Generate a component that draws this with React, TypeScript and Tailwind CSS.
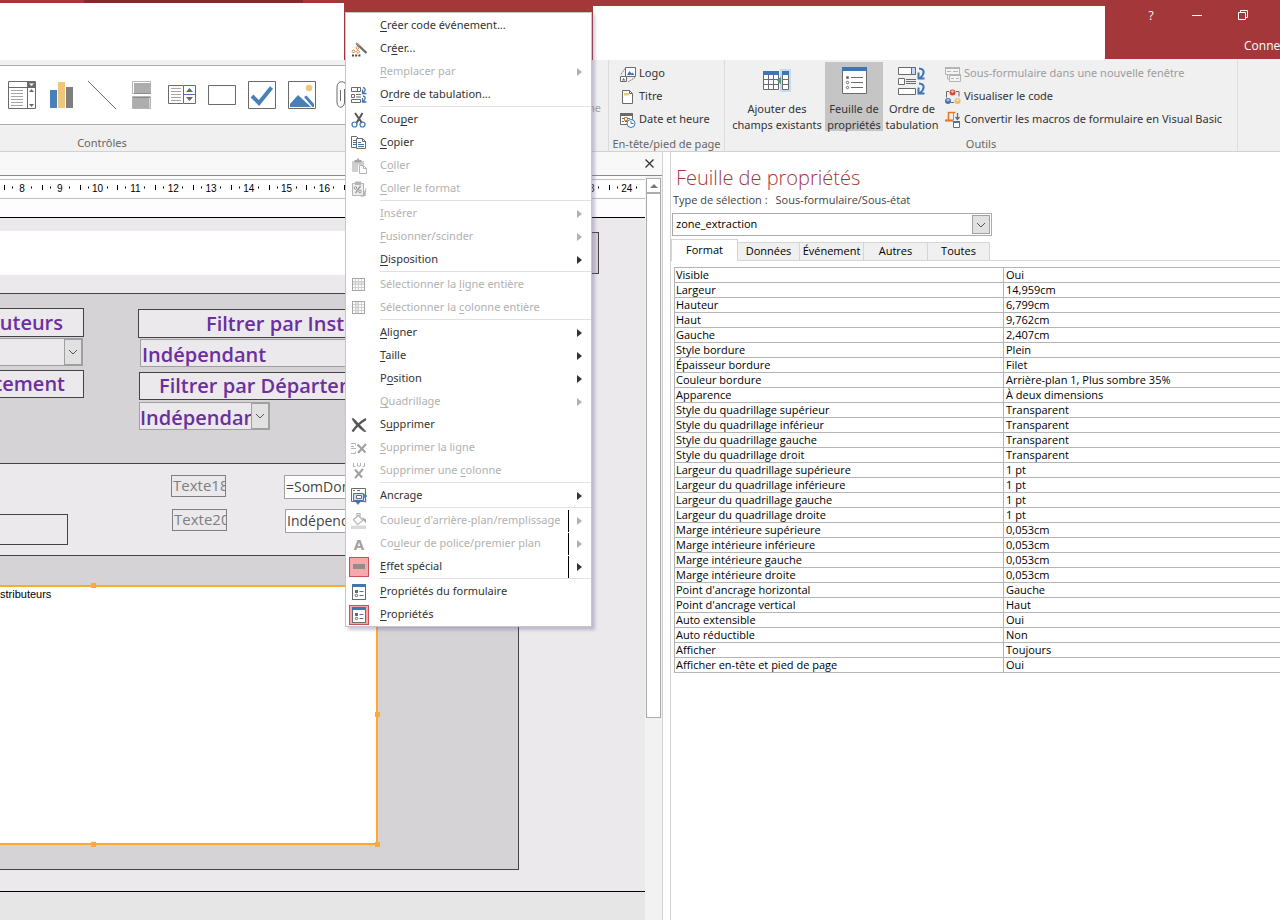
import { useState, type ReactNode } from 'react';
import clsx from 'clsx';

type MenuEntry = {
  label: string;
  // index of the underlined mnemonic letter
  key?: number;
  icon?: ReactNode;
  disabled?: boolean;
  sub?: boolean;
  split?: boolean;
  active?: boolean;
};

const GREY = '#6a6a6a';
const BLUE = '#3f75b5';
const ORANGE = '#e07b28';
const PALE = '#b4b4b4';

function Icon({ size = 20, children }: { size?: number; children: ReactNode }) {
  return (
    <svg width={size} height={size} viewBox={`0 0 ${size} ${size}`} fill="none" className="block shrink-0" aria-hidden="true">
      {children}
    </svg>
  );
}

const gridIcon = (
  <Icon>
    <path d="M3 6h13v4H3z" fill="#e2e2e2" />
    <path d="M6.5 3.5v12M9.5 3.5v12M12.5 3.5v12M3.5 6.5h12M3.5 9.5h12M3.5 12.5h12" stroke="#cfcfcf" />
    <rect x="3.5" y="3.5" width="12" height="12" stroke="#a6a6a6" />
  </Icon>
);

const gridColumnIcon = (
  <Icon>
    <path d="M6 3h4v13H6z" fill="#e2e2e2" />
    <path d="M6.5 3.5v12M9.5 3.5v12M12.5 3.5v12M3.5 6.5h12M3.5 9.5h12M3.5 12.5h12" stroke="#cfcfcf" />
    <rect x="3.5" y="3.5" width="12" height="12" stroke="#a6a6a6" />
  </Icon>
);

const sheetIcon = (
  <Icon>
    <rect x="3.5" y="2.5" width="13" height="15" fill="#fff" stroke={GREY} />
    <path d="M3 2h14v3H3z" fill={BLUE} />
    <path d="M6 8h3v3H6z" fill={GREY} />
    <path d="M10.5 9.5h4M10.5 13.5h4" stroke={GREY} />
    <circle cx="7.500" cy="13.500" r="1.200" stroke={GREY} />
  </Icon>
);

const MENU: MenuEntry[][] = [
  [
    { label: 'Créer code événement...', key: 0 },
    {
      label: 'Créer...',
      key: 2,
      icon: (
        <Icon>
          <path d="M7.500 4.500L17.500 14" stroke={GREY} strokeWidth="2.400" />
          <path d="M7 3.800l3.500 3.200" stroke="#9a9a9a" strokeWidth="1.200" />
          <path d="M8.500 7.200l1.600 1.600-1.600 1.600-1.600-1.600zM4.500 10.800l1.600 1.600-1.600 1.600-1.600-1.600zM9 11.200l1.600 1.600L9 14.400l-1.600-1.600z" stroke={ORANGE} />
          <path d="M3 15.500h2v2H3zM6.200 15.500h2v2h-2zM9.400 15.500h2v2h-2z" fill="#444" />
        </Icon>
      ),
    },
    { label: 'Remplacer par', key: 0, disabled: true, sub: true },
    {
      label: 'Ordre de tabulation...',
      key: 1,
      icon: (
        <Icon>
          <path d="M2.500 2.500h9v4h-9zM8.500 2.500v4M2.500 9.500h3v3h-3zM2.500 14.500h9v3h-9z" stroke={GREY} />
          <path d="M7 9.500h5M7 12h5" stroke={GREY} />
          <path d="M14 2.500c3 .5 3 3 0 5.500M13.500 4.500V8.500h4M14 11c3 .5 3 3 0 5.500M13.500 13v4h4" stroke={BLUE} strokeWidth="1.300" />
        </Icon>
      ),
    },
  ],
  [
    {
      label: 'Couper',
      key: 3,
      icon: (
        <Icon>
          <path d="M6 3l7 10M13.500 3l-6 10" stroke="#555" strokeWidth="2" />
          <circle cx="5.500" cy="14.500" r="2.500" stroke={BLUE} strokeWidth="1.200" />
          <circle cx="13.500" cy="14.500" r="2.500" stroke={BLUE} strokeWidth="1.200" />
        </Icon>
      ),
    },
    {
      label: 'Copier',
      key: 0,
      icon: (
        <Icon>
          <path d="M2.500 3.500h5l2 2v9h-7z" fill="#fff" stroke={GREY} />
          <path d="M4 7.500h3M4 9.500h3M4 11.500h3" stroke={BLUE} />
          <path d="M7.500 5.500h6l3 3v7h-9z" fill="#fff" stroke={GREY} />
          <path d="M13.500 5.500v3h3" stroke={GREY} />
          <path d="M9 9.500h3M9 11.500h6M9 13.500h6" stroke={BLUE} />
        </Icon>
      ),
    },
    {
      label: 'Coller',
      key: 1,
      disabled: true,
      icon: (
        <Icon>
          <path d="M3 5h12v4H9v7H3z" fill="#cfcfcf" />
          <path d="M5.500 4h2l1.500-2 1.500 2h2v2.500h-7z" fill="#a6a6a6" />
          <path d="M10.500 9.500h4l3 3v5h-7z" fill="#fff" stroke={PALE} />
          <path d="M14.500 9.500v3h3" stroke={PALE} />
        </Icon>
      ),
    },
    {
      label: 'Coller le format',
      key: 0,
      disabled: true,
      icon: (
        <Icon>
          <path d="M3.500 4.500h11v12h-11z" fill="#ededed" stroke={PALE} />
          <path d="M6 2.500h6V6H6z" fill={PALE} />
          <path d="M11.500 7l-5 7" stroke="#999" strokeWidth="1.300" />
          <circle cx="6.500" cy="9" r="1.300" stroke="#999" />
          <circle cx="11" cy="12.500" r="1.300" stroke="#999" />
          <path d="M17.500 8l-4 8-2 2 5-1z" fill={PALE} />
        </Icon>
      ),
    },
  ],
  [
    { label: 'Insérer', key: 0, disabled: true, sub: true },
    { label: 'Fusionner/scinder', key: 0, disabled: true, sub: true },
    { label: 'Disposition', key: 0, sub: true },
  ],
  [
    { label: 'Sélectionner la ligne entière', key: 16, disabled: true, icon: gridIcon },
    { label: 'Sélectionner la colonne entière', key: 16, disabled: true, icon: gridColumnIcon },
  ],
  [
    { label: 'Aligner', key: 0, sub: true },
    { label: 'Taille', key: 0, sub: true },
    { label: 'Position', key: 1, sub: true },
    { label: 'Quadrillage', key: 0, disabled: true, sub: true },
    {
      label: 'Supprimer',
      key: 1,
      icon: (
        <Icon>
          <path d="M3 3.500C5 3.500 6 4.500 7.500 6.500l9.500 10h-2C10 13 5 8 3 3.500z" fill="#555" stroke="#555" strokeWidth="0.600" />
          <path d="M17 4C12 7 8 10 3.500 16.500" stroke="#555" strokeWidth="2.200" />
        </Icon>
      ),
    },
    {
      label: 'Supprimer la ligne',
      key: 0,
      disabled: true,
      icon: (
        <Icon>
          <path d="M2 5.500h4.500v2M2 15.500h4.500v-2M2 10.500h5M2 8.500h3" stroke={PALE} />
          <path d="M8.500 6.500l8 8M17 6l-8 9" stroke="#a0a0a0" strokeWidth="2" />
        </Icon>
      ),
    },
    {
      label: 'Supprimer une colonne',
      key: 14,
      disabled: true,
      icon: (
        <Icon>
          <path d="M4.500 2v3.500h2M15.500 2v3.500h-2M8.500 2v3h3V2" stroke={PALE} />
          <path d="M6 8.500l7 8M14 8l-8 9" stroke="#a0a0a0" strokeWidth="2" />
        </Icon>
      ),
    },
  ],
  [
    {
      label: 'Ancrage',
      icon: (
        <Icon>
          <path d="M2.500 2.500h14v13h-14z" fill="#fff" stroke={GREY} />
          <path d="M4 4.500h2M8 4.500h3" stroke={GREY} />
          <path d="M4.500 7.500h10v7h-10z" fill="#cfdff0" stroke={BLUE} />
          <path d="M7.500 9.500h5v3h-5z" fill="#fff" stroke={GREY} />
          <path d="M7 16h4l-2 2.500zM15.500 8v4l2.500-2zM15.500 14h2M15.500 16h2" fill={BLUE} stroke={BLUE} strokeWidth="0.600" />
        </Icon>
      ),
      sub: true,
    },
  ],
  [
    {
      label: "Couleur d'arrière-plan/remplissage",
      key: 6,
      disabled: true,
      sub: true,
      split: true,
      icon: (
        <Icon>
          <path d="M4.500 8.500l5-4 4.500 5-5.500 4zM8 6V2.500h3v4" stroke={PALE} strokeWidth="1.200" />
          <path d="M13 6l4 2.500v4l-3-4z" fill="#a6a6a6" />
          <path d="M2 14.500h15v3.500H2z" fill="#dadada" />
        </Icon>
      ),
    },
    {
      label: 'Couleur de police/premier plan',
      key: 2,
      disabled: true,
      sub: true,
      split: true,
      icon: <span className="text-[15px] leading-4 font-bold text-[#a0a0a0]">A</span>,
    },
    {
      label: 'Effet spécial',
      key: 0,
      sub: true,
      split: true,
      active: true,
      icon: (
        <Icon size={18}>
          <path d="M3 6h12v5H3z" fill="#8e8e8e" />
        </Icon>
      ),
    },
  ],
  [
    { label: 'Propriétés du formulaire', key: 0, icon: sheetIcon },
    { label: 'Propriétés', key: 0, active: true, icon: sheetIcon },
  ],
];

const PROPERTIES: [string, string][] = [
  ['Visible', 'Oui'],
  ['Largeur', '14,959cm'],
  ['Hauteur', '6,799cm'],
  ['Haut', '9,762cm'],
  ['Gauche', '2,407cm'],
  ['Style bordure', 'Plein'],
  ['Épaisseur bordure', 'Filet'],
  ['Couleur bordure', 'Arrière-plan 1, Plus sombre 35%'],
  ['Apparence', 'À deux dimensions'],
  ['Style du quadrillage supérieur', 'Transparent'],
  ['Style du quadrillage inférieur', 'Transparent'],
  ['Style du quadrillage gauche', 'Transparent'],
  ['Style du quadrillage droit', 'Transparent'],
  ['Largeur du quadrillage supérieure', '1 pt'],
  ['Largeur du quadrillage inférieure', '1 pt'],
  ['Largeur du quadrillage gauche', '1 pt'],
  ['Largeur du quadrillage droite', '1 pt'],
  ['Marge intérieure supérieure', '0,053cm'],
  ['Marge intérieure inférieure', '0,053cm'],
  ['Marge intérieure gauche', '0,053cm'],
  ['Marge intérieure droite', '0,053cm'],
  ["Point d'ancrage horizontal", 'Gauche'],
  ["Point d'ancrage vertical", 'Haut'],
  ['Auto extensible', 'Oui'],
  ['Auto réductible', 'Non'],
  ['Afficher', 'Toujours'],
  ['Afficher en-tête et pied de page', 'Oui'],
];

const TABS = [
  { name: 'Format', width: 'w-[67px]' },
  { name: 'Données', width: 'w-[62px]' },
  { name: 'Événement', width: 'w-16' },
  { name: 'Autres', width: 'w-16' },
  { name: 'Toutes', width: 'w-[62px]' },
];

function TitleBar() {
  return (
    <header className="relative flex h-[60px] shrink-0 bg-[#a4373a] text-white">
      <div className="absolute top-0 left-[84px] h-[3px] w-[219px] bg-[#822b2e]" />
      <div className="mt-[3px] mr-[249px] w-[344px] shrink-0 bg-white" />
      <div className="mt-[6px] flex-1 bg-white" />
      <div className="flex w-[175px] shrink-0 flex-col overflow-hidden border-b border-[#f0f0f0]">
        <div className="flex h-8 shrink-0 items-center gap-[28px] pl-9">
          <button aria-label="Aide" className="w-5 text-[12px]">?</button>
          <button aria-label="Réduire">
            <Icon>
              <path d="M3 9.500h10" stroke="#fff" />
            </Icon>
          </button>
          <button aria-label="Restaurer">
            <Icon>
              <path d="M1.500 6.500h7v7h-7zM3.500 6.500v-2h7v7h-2" stroke="#fff" />
            </Icon>
          </button>
        </div>
        <a href="#" className="shrink-0 pl-[139px] text-[12px] leading-7 whitespace-nowrap">Connexion</a>
      </div>
    </header>
  );
}

function ControlGallery() {
  return (
    <div className="flex h-[60px] items-center gap-3 overflow-hidden border-y border-[#ababab] bg-white pl-2">
      <Icon size={28}>
        <path d="M.5.5h27v27H.5zM.5 6.500h27M19.500.5v27" stroke={GREY} />
        <path d="M20 1h7v5h-7z" fill={GREY} />
        <path d="M21 2.500h5L23.500 5z" fill="#fff" />
        <path d="M21 11l2.500-3 2.500 3zM21 23h5l-2.500 3z" fill={GREY} />
        <path d="M3 9.500h12M3 12.500h12M3 15.500h12M3 18.500h12M3 21.500h12M3 24.500h12" stroke="#a5a5a5" />
      </Icon>
      <Icon size={28}>
        <path d="M2 9h7v18H2z" fill="#4a80ba" />
        <path d="M10 1h7v26h-7z" fill="#efc77c" />
        <path d="M18 6h7v21h-7z" fill="#7d7f7f" />
      </Icon>
      <Icon size={28}>
        <path d="M0 0l28 28" stroke={GREY} />
      </Icon>
      <Icon size={28}>
        <path d="M4.500.5h18v12h-18zM4.500 15.500h18v12h-18z" fill="#fff" stroke={PALE} />
        <path d="M6 2h16.500v10.500H6zM5 16.500h16.500V27H5z" fill="#adadad" />
        <path d="M6 12.500h17M5 16.500h17" stroke="#8a8a8a" />
      </Icon>
      <Icon size={28}>
        <path d="M15 4.500H.5v18H15" stroke={GREY} />
        <path d="M3 7.500h10M3 10.500h10M3 13.500h10M3 16.500h10M3 19.500h10" stroke="#a5a5a5" />
        <path d="M15.500 4.500h12v18h-12zM15.500 13.500h12" stroke={BLUE} />
        <path d="M18 11l3.500-4 3.500 4zM18 16h7l-3.500 4z" fill={GREY} />
      </Icon>
      <Icon size={28}>
        <path d="M.5 4.500h27v19H.5z" stroke={GREY} />
      </Icon>
      <Icon size={28}>
        <path d="M.5.5h27v27H.5z" stroke={GREY} />
        <path d="M4 15l7 7L23.500 6.500" stroke="#4a80ba" strokeWidth="4" />
      </Icon>
      <Icon size={28}>
        <path d="M.5.5h27v27H.5z" stroke={GREY} />
        <circle cx="21" cy="7" r="3.200" fill="#efc77c" />
        <path d="M2 26v-3l8-9 13 12z" fill="#4a80ba" />
        <path d="M16 16l2.500-1.500L26 23v3h-1.500z" fill="#4a80ba" />
      </Icon>
      <div className="pl-2">
        <Icon size={28}>
          <path d="M8.500 8v13c0 7-7.500 7-7.500 0V6c0-7 9.500-7 9.500 0v14" stroke={GREY} />
          <path d="M4.500 9v11" stroke={GREY} />
        </Icon>
      </div>
    </div>
  );
}

function SmallButton({ icon, children, disabled }: { icon: ReactNode; children: ReactNode; disabled?: boolean }) {
  return (
    <button disabled={disabled} className="flex h-[23px] items-center gap-px whitespace-nowrap disabled:text-[#9d9d9d]">
      {icon}
      {children}
    </button>
  );
}

function Ribbon() {
  const big = 'flex h-[69px] shrink-0 flex-col items-center pt-[3px] text-center leading-4 whitespace-nowrap';
  return (
    <section className="flex h-[92px] shrink-0 overflow-hidden border-b border-[#d2d2d2] bg-[#f0f0f0] font-['Noto_Sans',sans-serif] text-[11px] text-[#333]">
      <div className="relative w-[609px] shrink-0 border-r border-[#dcdcdc] pt-[5px]">
        <div className="w-[575px]">
          <ControlGallery />
        </div>
        <p className="w-[204px] pt-[10px] text-center leading-4 text-[#666]">Contrôles</p>
        <span className="absolute top-10 right-[7px] text-[#a6a6a6]">ne</span>
      </div>

      <div className="flex w-[116px] shrink-0 flex-col border-r border-[#dcdcdc] pt-[2px]">
        <div className="flex flex-col pl-[9px]">
          <SmallButton
            icon={
              <Icon>
                <path d="M7.500 3.500h10v9h-10z" fill="#fff" stroke={GREY} />
                <path d="M9 11l2.500-4 2 2.500 1-1L16.500 11z" fill={BLUE} />
                <path d="M7 4.500L2.500 11M17 13.500L10 18" stroke={GREY} strokeDasharray="1.500 1" />
                <path d="M2.500 12.500h6v5h-6z" fill="#fff" stroke={GREY} />
                <path d="M4 16.500l1.500-2.500 2 2.500z" fill={BLUE} />
              </Icon>
            }
          >
            Logo
          </SmallButton>
          <SmallButton
            icon={
              <Icon>
                <path d="M4.500 3.500h7l3 3v10h-10z" fill="#fff" stroke={GREY} />
                <path d="M11.500 3.500v3h3" stroke={GREY} />
                <path d="M6 6h5v2.500H6z" fill="#efc77c" />
              </Icon>
            }
          >
            Titre
          </SmallButton>
          <SmallButton
            icon={
              <Icon>
                <path d="M2.500 3.500h12v11h-12z" fill="#fff" stroke={GREY} />
                <path d="M2 3h13v3H2z" fill={GREY} />
                <path d="M4 8.500h9M4 11.500h5" stroke={GREY} strokeDasharray="2 1" />
                <path d="M6.500 7.500h3v3h-3z" fill="#fff" stroke={ORANGE} />
                <circle cx="13" cy="13.500" r="4" fill="#fff" stroke={BLUE} />
                <path d="M13 11v2.500h2.500" stroke={BLUE} />
              </Icon>
            }
          >
            Date et heure
          </SmallButton>
        </div>
        <p className="pt-[5px] text-center leading-4 whitespace-nowrap text-[#666]">En-tête/pied de page</p>
      </div>

      <div className="flex w-[513px] shrink-0 flex-col border-r border-[#dcdcdc] pt-[2px]">
        <div className="flex">
          <button className={clsx(big, 'w-[100px] pl-1')}>
            <Icon size={32}>
              <path d="M2.500 6.500h15v18h-15z" fill="#fff" stroke={GREY} />
              <path d="M2.500 14.500h15M2.500 19.500h15M7.500 9v15.500M12.500 9v15.500" stroke={GREY} />
              <path d="M2 6h16v4H2z" fill={BLUE} />
              <path d="M19 4h11v23H19z" fill="#c5dbef" />
              <path d="M21.500 6.500h6v18h-6z" fill="#fff" stroke={GREY} />
              <path d="M21.500 14.500h6M21.500 19.500h6" stroke={GREY} />
              <path d="M21 6h7v4h-7z" fill={BLUE} />
              <path d="M20 11.500v8l-4-4z" fill="#4f9d7d" />
            </Icon>
            <span className="mt-1">Ajouter des<br />champs existants</span>
          </button>
          <button aria-pressed="true" className={clsx(big, 'w-[58px] bg-[#c5c5c5]')}>
            <Icon size={32}>
              <path d="M4.500 2.500h24v26h-24z" fill="#fff" stroke={GREY} />
              <path d="M4 2h25v4H4z" fill={BLUE} />
              <circle cx="9.500" cy="12.500" r="1.500" fill={GREY} />
              <circle cx="9.500" cy="17.500" r="1.200" stroke={GREY} />
              <circle cx="9.500" cy="22.500" r="1.200" stroke={GREY} />
              <path d="M13 12.500h12M13 17.500h12M13 22.500h12" stroke={GREY} />
            </Icon>
            <span className="mt-1">Feuille de<br />propriétés</span>
          </button>
          <button className={clsx(big, 'w-[58px]')}>
            <Icon size={32}>
              <path d="M2.500 2.500h17v7h-17z" fill="#fff" stroke={GREY} />
              <path d="M15.500 2.500h4v7h-4z" fill="#c5dbef" stroke={GREY} />
              <path d="M2.500 13.500h6v6h-6z" fill="#fff" stroke={GREY} />
              <path d="M10 14.500h10M10 16.500h10M10 18.500h10" stroke={GREY} />
              <path d="M2.500 23.500h17v6h-17z" fill="#fff" stroke={GREY} />
              <path d="M23 3.500c6 .5 6 5.500 1 9.500M22.500 7.500v6h6M23 18.500c6 .5 6 5.500 1 9.500M22.500 22.500v6h6" stroke={BLUE} strokeWidth="2" />
            </Icon>
            <span className="mt-1">Ordre de<br />tabulation</span>
          </button>
          <div className="flex flex-col pl-[2px]">
            <SmallButton
              disabled
              icon={
                <Icon>
                  <path d="M2.500 3.500h14v7h-14zM6.500 10.500h11v7h-11z" fill="#f4f4f4" stroke={PALE} />
                  <path d="M2 3h15v2H2zM6 10h12v2H6z" fill={PALE} />
                  <path d="M4 7.500h4M10 7.500h5M8 14.500h3M13 14.500h3M4.500 11v4H6" stroke={PALE} />
                </Icon>
              }
            >
              Sous-formulaire dans une nouvelle fenêtre
            </SmallButton>
            <SmallButton
              icon={
                <Icon>
                  <path d="M6 4.500H3.500v6M13 4.500h3v5M8 15.500h3" stroke={GREY} />
                  <circle cx="9.500" cy="5.500" r="3" fill="#d9492f" />
                  <circle cx="5" cy="14" r="3" fill={BLUE} />
                  <circle cx="14.500" cy="14" r="3" fill="#efb866" />
                  <path d="M7.500 4.500l2-1.500 2 1.500-2 1.500zM3 13l2-1.500L7 13l-2 1.500zM12.500 13l2-1.500 2 1.500-2 1.500z" fill="#fff" fillOpacity=".6" />
                </Icon>
              }
            >
              Visualiser le code
            </SmallButton>
            <SmallButton
              icon={
                <Icon>
                  <path d="M5.500 10.500v-8h7" stroke={ORANGE} strokeWidth="1.600" />
                  <path d="M10.500 3v7.500" stroke={ORANGE} />
                  <path d="M2 10.500h8" stroke={ORANGE} strokeWidth="2.200" />
                  <path d="M14.500 3v6M12.500 7l2 2.500 2-2.500" stroke={GREY} strokeWidth="1.300" />
                  <path d="M10.500 11.500h6v6h-6z" fill="#fff" stroke={GREY} />
                  <path d="M10 11h7v2h-7z" fill={BLUE} />
                </Icon>
              }
            >
              Convertir les macros de formulaire en Visual Basic
            </SmallButton>
          </div>
        </div>
        <p className="pt-[5px] text-center leading-4 text-[#666]">Outils</p>
      </div>
    </section>
  );
}

// One centimetre is 37.8 px at 96 dpi
function Ruler() {
  const marks = Array.from({ length: 17 }, (_, i) => i + 8);
  return (
    <svg width="100%" height="20" className="block border-y border-[#c0c0c0] bg-white" aria-hidden="true">
      {marks.map(n => {
        const x = 22 + (n - 8) * 37.8;
        return (
          <g key={n}>
            <text x={x} y="12" fontSize="10" textAnchor="middle" fontFamily="Liberation Sans, sans-serif" fill="#000">{n}</text>
            <path d={`M${Math.round(x + 9)} 7.500h1M${Math.round(x - 10)} 7.500h1`} stroke="#000" strokeWidth="2" />
            <path d={`M${Math.round(x - 18)}.5 5v5`} stroke="#000" />
          </g>
        );
      })}
    </svg>
  );
}

function Chevron() {
  return (
    <svg width="10" height="6" viewBox="0 0 10 6" fill="none" aria-hidden="true">
      <path d="M1 1l4 4 4-4" stroke="#555" />
    </svg>
  );
}

function Combo({ label, value, className }: { label: string; value: string; className?: string }) {
  return (
    <div className={clsx('flex border border-[#a0a0a0]', className)}>
      <select aria-label={label} className="min-w-0 flex-1 appearance-none overflow-hidden outline-none">
        <option>{value}</option>
      </select>
      <span className="pointer-events-none flex w-[18px] shrink-0 items-center justify-center border border-[#a0a0a0] bg-[#e1e1e1]">
        <Chevron />
      </span>
    </div>
  );
}

function FormCanvas() {
  const title = 'absolute flex items-center overflow-hidden border border-[#45404a] bg-[#ebe9eb] whitespace-nowrap';
  const handle = 'absolute size-[5px] bg-[#ffa832]';
  return (
    <div className="relative h-[674px] overflow-hidden border-t border-black bg-[#ebe9eb]">
      <div className="absolute top-[14px] left-[300px] h-[42px] w-[299px] border border-[#45404a] bg-[#d6d3d6]" />
      <div className="absolute top-[13px] left-0 h-[44px] w-[346px] bg-white" />

      <div className="absolute top-[75px] -left-px h-[577px] w-[520px] border border-[#45404a] bg-[#d6d3d6]">
        <div className="mt-[169px] h-[93px] border-y border-[#45404a] bg-[#ebe9eb]" />
      </div>

      <div className="text-[20px] font-semibold text-[#6b2f9e]">
        <div className={clsx(title, 'top-[90px] -left-[240px] h-[29px] w-[324px] justify-end pr-5')}>Filtrer par Distributeurs</div>
        <Combo label="Distributeur" value="" className="absolute top-[120px] -left-px h-7 w-[84px] bg-[#ebe9eb]" />
        <div className={clsx(title, 'top-[152px] -left-[240px] h-[28px] w-[324px] justify-end pr-[18px]')}>Filtrer par Département</div>

        <div className={clsx(title, 'top-[91px] left-[138px] h-[29px] w-[340px] pl-[67px]')}>Filtrer par Institution</div>
        <Combo label="Institution" value="Indépendant" className="absolute top-[121px] left-[140px] h-7 w-[338px] bg-[#ebe9eb] pl-px" />
        <div className={clsx(title, 'top-[154px] left-[139px] h-[28px] w-[339px] pl-[19px]')}>Filtrer par Département</div>
        <Combo label="Département" value="Indépendant" className="absolute top-[184px] left-[139px] h-7 w-[131px] bg-[#ebe9eb]" />
      </div>

      <div className="text-[14px] text-[#444]">
        <input aria-label="Total" readOnly className="absolute top-[296px] -left-px h-[31px] w-[69px] border border-[#45404a]" />
        <input aria-label="Texte18" readOnly defaultValue="Texte18" className="absolute top-[257px] left-[171px] h-[22px] w-[55px] border border-[#7f7f7f] pb-[2px] pl-px text-[15px] text-[#7f7f7f]" />
        <input aria-label="Texte20" readOnly defaultValue="Texte20" className="absolute top-[291px] left-[172px] h-[22px] w-[55px] border border-[#7f7f7f] pb-[2px] pl-px text-[15px] text-[#7f7f7f]" />
        <input aria-label="Somme" readOnly defaultValue="=SomDom" className="absolute top-[257px] left-[284px] h-6 w-[120px] border border-[#a0a0a0] bg-white pb-[2px] pl-px" />
        <input aria-label="Zone" readOnly defaultValue="Indépendant" className="absolute top-[291px] left-[285px] h-6 w-[120px] border border-[#a0a0a0] bg-white pb-[2px] pl-px" />
      </div>

      <div className="absolute top-[367px] -left-[60px] h-[260px] w-[438px] border-2 border-[#ffa832] bg-white pl-[58px] font-['Liberation_Sans',sans-serif] text-[11px] leading-[14px] text-black">
        stributeurs
        <span className={clsx(handle, '-top-1 left-[149px]')} />
        <span className={clsx(handle, '-bottom-1 left-[149px]')} />
        <span className={clsx(handle, 'top-[125px] -right-1')} />
        <span className={clsx(handle, '-right-1 -bottom-1')} />
      </div>
    </div>
  );
}

function DesignWindow() {
  return (
    <main className="flex w-[663px] shrink-0 flex-col border-r border-[#d0d0d0] bg-[#fdfdfd]">
      <div className="flex h-6 items-center justify-end border-b border-[#8a8a8a] bg-[#f8f8f8] pr-2">
        <button aria-label="Fermer">
          <svg width="9" height="9" viewBox="0 0 9 9" fill="none" className="block">
            <path d="M.5.5l8 8M8.500.5l-8 8" stroke="#333" strokeWidth="1.300" />
          </svg>
        </button>
      </div>
      <div className="flex flex-1">
        <div className="flex min-w-0 flex-1 flex-col">
          <div className="h-[41px] pt-[3px]">
            <Ruler />
          </div>
          <FormCanvas />
          <div className="flex-1 border-t border-black bg-[#e6e6e6]" />
        </div>
        <div className="flex w-[17px] flex-col bg-[#f2f2f2] px-px pt-[2px]">
          <button aria-label="Défiler vers le haut" className="flex h-[15px] items-center justify-center border border-[#ababab] bg-white">
            <svg width="8" height="4" viewBox="0 0 8 4" aria-hidden="true">
              <path d="M0 4l4-4 4 4z" fill="#777" />
            </svg>
          </button>
          <div className="h-[525px] border border-[#ababab] bg-white" />
        </div>
      </div>
    </main>
  );
}

function PropertySheet() {
  const [tab, setTab] = useState('Format');
  return (
    <aside className="ml-[7px] min-w-0 flex-1 border-l border-[#d0d0d0] bg-white text-[11px] text-black">
      <h1 className="pt-[12px] pl-[5px] text-[20px] leading-7 font-light text-[#a4373a]">Feuille de propriétés</h1>
      <p className="flex gap-2 pl-[2px] leading-4 text-[#444]">
        <span>Type de sélection :</span>
        <span>Sous-formulaire/Sous-état</span>
      </p>
      <Combo label="Objet sélectionné" value="zone_extraction" className="mt-[5px] ml-px h-[23px] w-[320px] border-[#ababab] bg-white p-px pl-[3px]" />

      <div role="tablist" className="mt-[3px] flex items-end border-b border-[#d5d5d5]">
        {TABS.map(t => (
          <button
            key={t.name}
            role="tab"
            aria-selected={tab === t.name}
            onClick={() => setTab(t.name)}
            className={clsx(
              'border-t border-r border-[#d5d5d5] text-center',
              t.width,
              tab === t.name ? '-mb-px h-[22px] border-l bg-white pb-px' : 'h-[18px] bg-[#f0f0f0]',
            )}
          >
            {t.name}
          </button>
        ))}
      </div>

      <div className="pt-[6px] pl-[3px]">
        <table className="w-full table-fixed border-collapse border-y border-l border-[#b5b5b5]">
          <tbody>
            {PROPERTIES.map(([name, value]) => (
              <tr key={name} className="h-[15px] border-b border-[#b5b5b5]">
                <th scope="row" className="w-[329px] border-r border-[#b5b5b5] p-0 pl-px text-left leading-[14px] font-normal">{name}</th>
                <td className="p-0 pl-[2px] leading-[14px]">{value}</td>
              </tr>
            ))}
          </tbody>
        </table>
      </div>
    </aside>
  );
}

function MenuLabel({ text, at }: { text: string; at?: number }) {
  if (at === undefined) return <span>{text}</span>;
  return (
    <span>
      {text.slice(0, at)}
      <u className="underline-offset-2">{text[at]}</u>
      {text.slice(at + 1)}
    </span>
  );
}

function ContextMenu() {
  return (
    <div className="absolute top-3 left-[345px] w-[247px] border border-[#c6c6c6] bg-white pt-px font-['Noto_Sans',sans-serif] text-[11px] text-[#333] shadow-[3px_3px_3px_rgba(110,95,150,0.35)]">
      {MENU.map((group, i) => (
        <div key={group[0].label}>
          {i > 0 && <div className="mb-px ml-[34px] h-px bg-[#e1e1e1]" />}
          {group.map(item => (
            <button
              key={item.label}
              disabled={item.disabled}
              className="flex h-[23px] w-full items-center pl-[3px] text-left whitespace-nowrap disabled:text-[#b1b1b1]"
            >
              <span
                className={clsx(
                  'mr-[11px] flex size-5 shrink-0 items-center justify-center',
                  item.active && 'border border-[#c94f55] bg-[#f7a8ab]',
                )}
              >
                {item.icon}
              </span>
              <MenuLabel text={item.label} at={item.key} />
              {item.sub && (
                <span className={clsx('ml-auto flex h-[22px] w-[23px] shrink-0 items-center border-l pl-2', item.split ? 'border-black' : 'border-transparent')}>
                  <svg width="5" height="8" viewBox="0 0 5 8" fill="currentColor" aria-hidden="true">
                    <path d="M0 0l5 4-5 4z" />
                  </svg>
                </span>
              )}
            </button>
          ))}
        </div>
      ))}
    </div>
  );
}

export default function App() {
  return (
    <div className="relative flex min-h-screen flex-col overflow-hidden bg-white font-['Open_Sans','Noto_Sans',sans-serif]">
      <TitleBar />
      <Ribbon />
      <div className="flex flex-1">
        <DesignWindow />
        <PropertySheet />
      </div>
      <ContextMenu />
    </div>
  );
}
